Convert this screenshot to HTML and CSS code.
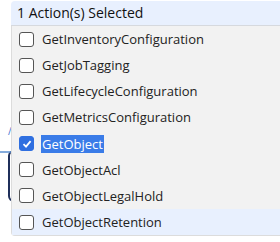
FILE: index.html
```html
<!DOCTYPE html>
<html lang="en">
<head>
    <meta charset="UTF-8">
    <meta name="viewport" content="width=device-width, initial-scale=1.0">
    <title>Actions</title>
    <link rel="stylesheet" href="styles.css">
</head>
<body>
    <div class="backdrop">
        <div class="back-card"></div>
        <span class="back-mark">/</span>
        <svg class="back-arrow" width="24" height="12" viewBox="0 0 24 12">
            <line x1="0" y1="6" x2="16" y2="6" stroke="#5b8fd0" stroke-width="1.5"/>
            <polygon points="15,1 22,6 15,11" fill="#5b8fd0"/>
        </svg>
    </div>

    <div class="picker">
        <div class="picker-head">1 Action(s) Selected</div>
        <ul class="options">
            <li class="option"><span class="box"></span><span class="label">GetInventoryConfiguration</span></li>
            <li class="option"><span class="box"></span><span class="label">GetJobTagging</span></li>
            <li class="option"><span class="box"></span><span class="label">GetLifecycleConfiguration</span></li>
            <li class="option"><span class="box"></span><span class="label">GetMetricsConfiguration</span></li>
            <li class="option">
                <span class="box checked">
                    <svg width="10" height="10" viewBox="0 0 10 10"><path d="M1.5 5.2 L4 7.6 L8.6 2.2" fill="none" stroke="#fff" stroke-width="1.8"/></svg>
                </span>
                <span class="label selected">GetObject</span>
            </li>
            <li class="option"><span class="box"></span><span class="label">GetObjectAcl</span></li>
            <li class="option"><span class="box"></span><span class="label">GetObjectLegalHold</span></li>
            <li class="option hover"><span class="box"></span><span class="label">GetObjectRetention</span></li>
        </ul>
    </div>
</body>
</html>
```

FILE: styles.css
```css
body {
    margin: 0;
    background: #fff;
    font-family: 'Open Sans', sans-serif;
    width: 280px;
    height: 242px;
    overflow: hidden;
    position: relative;
}
.backdrop {
    position: absolute;
    left: 0;
    top: 0;
}
.back-card {
    position: absolute;
    left: 8px;
    top: 150px;
    width: 60px;
    height: 48px;
    border: 2px solid #1f2f5a;
    border-radius: 6px;
}
.back-mark {
    position: absolute;
    left: 8px;
    top: 124px;
    color: #3d6fd0;
    font-size: 10px;
}
.back-arrow {
    position: absolute;
    left: 0;
    top: 146px;
}
.picker {
    position: relative;
    margin: 1px 0 0 11px;
    width: 280px;
}
.picker-head {
    height: 24px;
    line-height: 24px;
    padding-left: 6px;
    background: #e8f0fe;
    border-bottom: 1px solid #d6d9de;
    border-radius: 4px 0 0 0;
    font-size: 14px;
    color: #111;
}
.options {
    list-style: none;
    margin: 0;
    padding: 0;
    background: #f2f2f2;
    border-left: 1px solid #dcdcdc;
    border-bottom: 1px solid #dcdcdc;
    border-radius: 0 0 0 4px;
}
.option {
    height: 26.15px;
    display: flex;
    align-items: center;
    gap: 7px;
    padding-left: 7px;
    font-size: 13px;
    color: #222;
}
.option.hover {
    background: #e8f0fe;
}
.box {
    width: 13px;
    height: 13px;
    border: 1px solid #555;
    border-radius: 3px;
    background: #fff;
    display: flex;
    align-items: center;
    justify-content: center;
}
.box.checked {
    background: #2f6fe0;
    border-color: #2f6fe0;
}
.label {
    padding: 0 1px;
}
.label.selected {
    background: #3a7ce8;
    color: #fff;
}
```
